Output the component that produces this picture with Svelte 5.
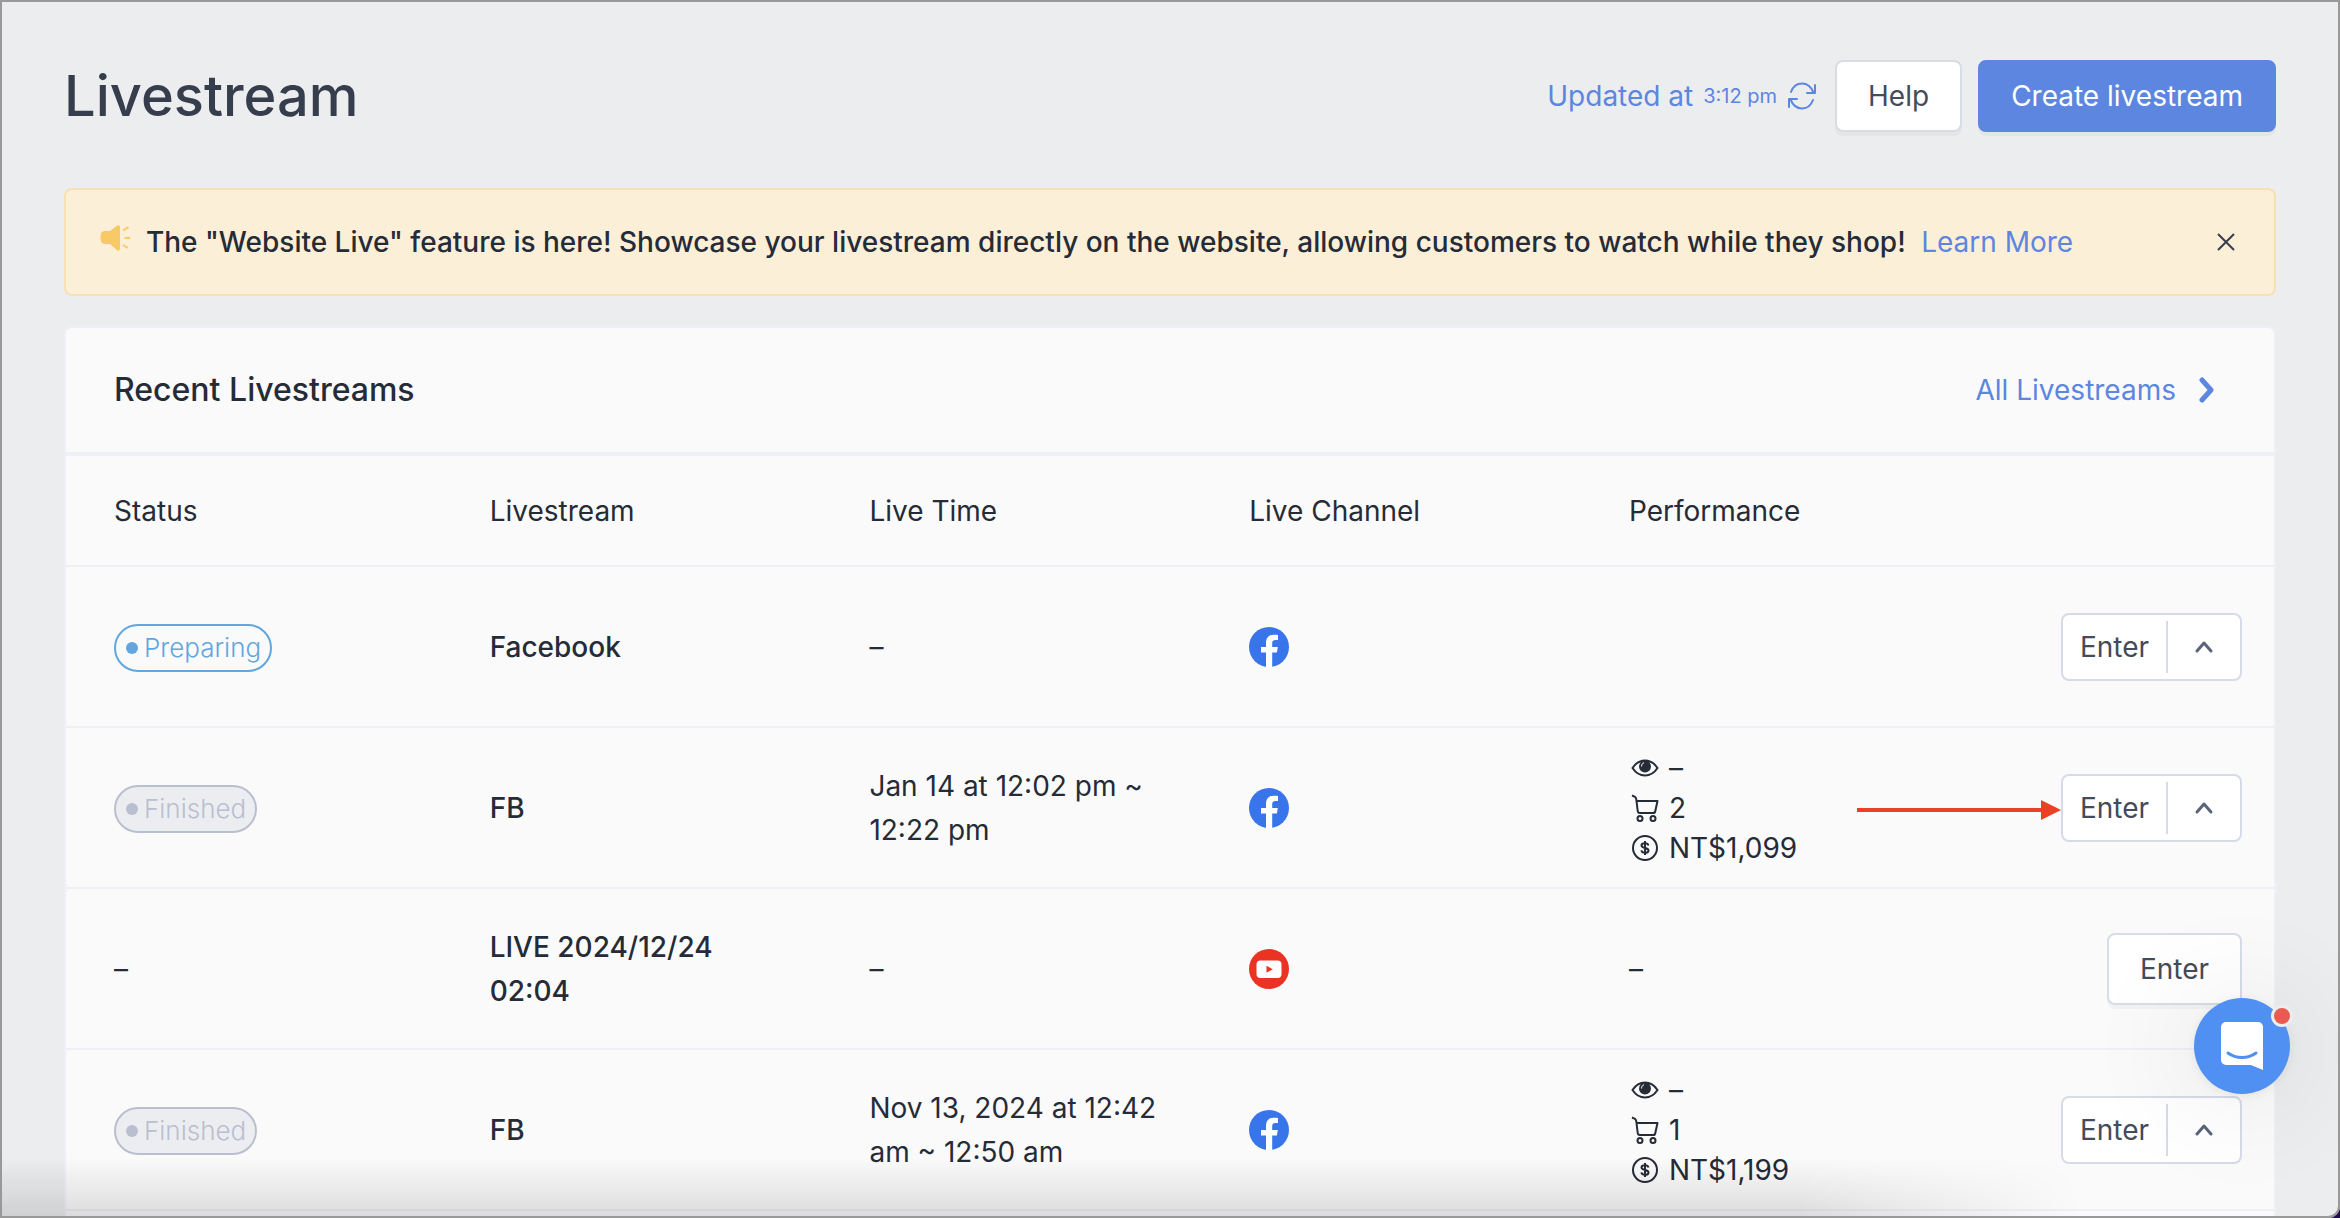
<script lang="ts">
  type Stream = {
    status: string;
    name: string;
    time: string;
    channel: string;
    views?: string;
    orders?: string;
    sales?: string;
    split: boolean;
    noStats?: boolean;
  };

  const streams: Stream[] = [
    { status: "Preparing", name: "Facebook", time: "–", channel: "facebook", split: true },
    {
      status: "Finished",
      name: "FB",
      time: "Jan 14 at 12:02 pm ~ 12:22 pm",
      channel: "facebook",
      views: "–",
      orders: "2",
      sales: "NT$1,099",
      split: true,
    },
    { status: "", name: "LIVE 2024/12/24 02:04", time: "–", channel: "youtube", split: false, noStats: true },
    {
      status: "Finished",
      name: "FB",
      time: "Nov 13, 2024 at 12:42 am ~ 12:50 am",
      channel: "facebook",
      views: "–",
      orders: "1",
      sales: "NT$1,199",
      split: true,
    },
  ];

  const columns = ["Status", "Livestream", "Live Time", "Live Channel", "Performance"];

  let showBanner = $state(true);
</script>

<div class="page">
  <header class="page-header">
    <h1>Livestream</h1>
    <div class="page-actions">
      <button class="refresh">
        <span>Updated at</span>
        <small>3:12 pm</small>
        <svg width="30" height="30" viewBox="0 0 30 30" fill="none" stroke="currentColor" stroke-width="2" stroke-linecap="round" stroke-linejoin="round">
          <path d="M4 11C6 5.500 10 2.500 15 2.500c5 0 9 3 11.500 9M28 4v8h-8" />
          <path d="M26 19C24 24.500 20 27.500 15 27.500c-5 0-9-3-11.500-9M2 26v-8h8" />
        </svg>
      </button>
      <button class="btn">Help</button>
      <button class="btn btn-primary">Create livestream</button>
    </div>
  </header>

  {#if showBanner}
    <div class="banner">
      <svg class="horn" width="32" height="34" viewBox="0 0 32 34" aria-hidden="true">
        <path fill="#f7c967" d="M5 6h5l7-5.300c1.500-1 3 0 3 1.500v21.600c0 1.500-1.500 2.500-3 1.500L10 19H5c-3 0-4.500-2-4.500-6.500S2 6 5 6z" />
        <path fill="none" stroke="#f7c967" stroke-width="2" d="M23 5.500l5.500-3.300M24.500 13H30M23 20l5 3" />
      </svg>
      <p>
        The "Website Live" feature is here! Showcase your livestream directly on the website, allowing customers to watch while they shop!
        <a href="#learn">Learn More</a>
      </p>
      <button class="close" aria-label="Close" onclick={() => (showBanner = false)}>
        <svg width="20" height="20" viewBox="0 0 20 20" fill="none" stroke="currentColor" stroke-width="2">
          <path d="M2 2l16 16M18 2L2 18" />
        </svg>
      </button>
    </div>
  {/if}

  <section class="card">
    <div class="card-header">
      <h2>Recent Livestreams</h2>
      <a href="#all">
        All Livestreams
        <svg width="18" height="26" viewBox="0 0 18 26" fill="none" stroke="currentColor" stroke-width="5" stroke-linecap="round" stroke-linejoin="round">
          <path d="M4 3l9 10-9 10" />
        </svg>
      </a>
    </div>

    <table>
      <thead>
        <tr>
          {#each columns as column}
            <th scope="col">{column}</th>
          {/each}
          <th class="actions" aria-label="Actions"></th>
        </tr>
      </thead>
      <tbody>
        {#each streams as stream}
          <tr>
            <td>
              {#if stream.status}
                <span class="tag" class:finished={stream.status === "Finished"}>{stream.status}</span>
              {:else}
                –
              {/if}
            </td>
            <td class="name">{stream.name}</td>
            <td>{stream.time}</td>
            <td>
              {#if stream.channel === "facebook"}
                <svg class="channel" viewBox="0 0 40 40" role="img" aria-label="Facebook">
                  <circle cx="20" cy="20" r="20" fill="#3975ea" />
                  <path fill="#fff" d="M17 40V25.500h-5V20h5v-3.500c0-6 3-8.800 8-8.800 1.500 0 3 .2 4 .4v5h-2.600c-2.400 0-3.200 1.400-3.200 3V20h5.600l-.9 5.500h-4.700V40z" />
                </svg>
              {:else}
                <svg class="channel" viewBox="0 0 40 40" role="img" aria-label="YouTube">
                  <circle cx="20" cy="20" r="20" fill="#ea3323" />
                  <rect x="7.500" y="11.500" width="25" height="17.500" rx="4" fill="#fff" />
                  <path fill="#ea3323" d="M17.500 16.700v7l6.300-3.500z" />
                </svg>
              {/if}
            </td>
            <td>
              {#if stream.noStats}
                –
              {:else if stream.sales}
                <ul class="stats">
                  <li>
                    <svg width="28" height="28" viewBox="0 0 28 28" fill="none" stroke="currentColor" stroke-width="2">
                      <path d="M1.500 14C8 4 20 4 26.500 14 20 24 8 24 1.500 14z" />
                      <circle cx="14" cy="12.500" r="6" fill="currentColor" stroke="none" />
                      <path d="M10.500 12.500c0-2 1-3.300 2.500-3.800" stroke="#fff" stroke-width="1" />
                    </svg>
                    {stream.views}
                  </li>
                  <li>
                    <svg width="28" height="28" viewBox="0 0 28 28" fill="none" stroke="currentColor" stroke-width="2" stroke-linejoin="round">
                      <path d="M1 1.500l3 1.300c1 .5 1.300 1.500 1.500 4.200l1.200 10c.2 1.500.8 2 2 2h13.600c1.200 0 1.800-.6 2-2L26.500 7h-21" />
                      <circle cx="9" cy="24.500" r="2.500" />
                      <circle cx="22" cy="24.500" r="2.500" />
                    </svg>
                    {stream.orders}
                  </li>
                  <li>
                    <svg width="28" height="28" viewBox="0 0 28 28" fill="none" stroke="currentColor" stroke-width="2">
                      <circle cx="14" cy="14" r="12" />
                      <path d="M17.500 11.500c-.4-1.600-1.800-2.200-3.500-2.200-2 0-3.500.8-3.500 2.300 0 3.200 7 1.500 7 4.800 0 1.500-1.500 2.400-3.500 2.400-1.800 0-3.300-.7-3.600-2.400M14 7v14" />
                    </svg>
                    {stream.sales}
                  </li>
                </ul>
              {/if}
            </td>
            <td class="actions">
              {#if stream.split}
                <div class="split">
                  <button>Enter</button>
                  <button class="toggle" aria-label="More actions">
                    <svg width="20" height="14" viewBox="0 0 20 14" fill="none" stroke="currentColor" stroke-width="3" stroke-linecap="round" stroke-linejoin="round">
                      <path d="M3 11l7-8 7 8" />
                    </svg>
                  </button>
                  {#if stream.orders === "2"}
                    <svg class="pointer" width="204" height="20" viewBox="0 0 204 20" aria-hidden="true">
                      <path fill="#ea4025" d="M0 8h184V0l20 10-20 10v-8H0z" />
                    </svg>
                  {/if}
                </div>
              {:else}
                <button class="btn">Enter</button>
              {/if}
            </td>
          </tr>
        {/each}
      </tbody>
    </table>
  </section>

  <div class="shade"></div>

  <button class="launcher" aria-label="Open chat">
    <svg width="44" height="50" viewBox="0 0 44 50">
      <path fill="#fff" d="M6 1h32a5 5 0 0 1 5 5v43l-12-5H6a5 5 0 0 1-5-5V6a5 5 0 0 1 5-5z" />
      <path fill="none" stroke="#5090f3" stroke-width="3" stroke-linecap="round" d="M8 32c8 6 20 6 28 0" />
    </svg>
    <span class="unread"></span>
  </button>
  <div class="frame"></div>
</div>

<style>
  :global(body) {
    margin: 0;
    background: #1f0d4d;
  }

  .page {
    position: relative;
    display: flex;
    flex-direction: column;
    box-sizing: border-box;
    min-height: 100vh;
    padding: 60px 64px 0;
    border-bottom-right-radius: 12px;
    background: #ecedef;
    color: #252b37;
    font-family: Inter, "Liberation Sans", sans-serif;
    font-size: 28px;
    line-height: 44px;
  }

  .frame {
    position: absolute;
    inset: 0;
    border: 2px solid #999;
    border-bottom-right-radius: 12px;
    pointer-events: none;
  }

  button {
    margin: 0;
    padding: 0;
    border: 0;
    background: none;
    color: inherit;
    font: inherit;
    cursor: pointer;
  }

  a {
    color: #5c86df;
    text-decoration: none;
  }

  h1,
  h2,
  p,
  ul {
    margin: 0;
    padding: 0;
  }

  h1 {
    color: #363d4d;
    font-size: 56px;
    font-weight: 500;
    line-height: 72px;
  }

  h2 {
    font-size: 32px;
    font-weight: 500;
  }

  .page-header {
    display: flex;
    align-items: center;
    justify-content: space-between;
    margin-bottom: 56px;
  }

  .page-actions {
    display: flex;
    align-items: center;
    gap: 16px;
  }

  .refresh {
    display: flex;
    align-items: center;
    gap: 10px;
    margin-right: 2px;
    color: #5c86df;
  }

  .refresh small {
    font-size: 20px;
  }

  .btn {
    box-sizing: border-box;
    height: 72px;
    padding: 0 31px;
    border: 2px solid #d5dde6;
    border-radius: 8px;
    background: #fff;
    box-shadow: 0 4px 0 rgba(0, 0, 0, 0.03);
    color: #444b59;
  }

  .btn-primary {
    border-color: #5c86df;
    background: #5c86df;
    color: #fff;
  }

  .banner {
    display: flex;
    align-items: center;
    padding: 30px 32px 30px 34px;
    border: 2px solid #f9e0b3;
    border-radius: 8px;
    background: #fcefd7;
    margin-bottom: 30px;
  }

  .horn {
    margin-right: 14px;
  }

  .banner p {
    flex: 1;
    font-weight: 500;
  }

  .banner a {
    margin-left: 8px;
    font-weight: 400;
  }

  .close {
    display: flex;
    padding: 6px;
    color: #363d4d;
  }

  .card {
    flex: 1;
    border: 2px solid #eff0f5;
    border-bottom: 0;
    border-radius: 8px 8px 0 0;
    background: #fafafa;
  }

  .card-header {
    display: flex;
    align-items: center;
    justify-content: space-between;
    padding: 40px 58px 40px 48px;
    border-bottom: 4px solid #eff0f5;
  }

  .card-header a {
    display: flex;
    align-items: center;
    gap: 22px;
  }

  table {
    width: 100%;
    border-collapse: collapse;
    table-layout: fixed;
  }

  th,
  td {
    box-sizing: border-box;
    width: 17.2%;
    padding: 0 48px 0 24px;
    border-bottom: 2px solid #eff0f5;
    text-align: left;
    vertical-align: middle;
  }

  th {
    height: 110px;
    font-weight: 400;
  }

  td {
    height: 161px;
  }

  th:first-child,
  td:first-child {
    width: 18.1%;
    padding-left: 48px;
  }

  .actions {
    width: auto;
    padding: 0 32px 0 0;
    text-align: right;
  }

  .name {
    font-weight: 500;
  }

  .tag {
    display: inline-flex;
    align-items: center;
    box-sizing: border-box;
    height: 48px;
    padding: 0 9px 0 10px;
    border: 2px solid #62a6dd;
    border-radius: 24px;
    color: #62a6dd;
    font-size: 26px;
    font-weight: 300;
  }

  .tag::before {
    content: "";
    width: 12px;
    height: 12px;
    margin-right: 6px;
    border-radius: 50%;
    background: currentColor;
  }

  .tag.finished {
    border-color: #b9bfcf;
    background: #ecedf0;
    color: #b9bfcf;
  }

  .channel {
    display: block;
    width: 40px;
    height: 40px;
  }

  .stats {
    padding-left: 2px;
    list-style: none;
    line-height: 40px;
  }

  .stats li {
    display: flex;
    align-items: center;
    gap: 10px;
  }

  .split {
    position: relative;
    display: inline-flex;
    align-items: center;
    box-sizing: border-box;
    height: 68px;
    border: 2px solid #d7dbe8;
    border-radius: 8px;
    background: #fff;
    color: #444b59;
    vertical-align: middle;
  }

  .split button {
    padding: 0 17px;
    line-height: 52px;
  }

  .split .toggle {
    display: flex;
    align-items: center;
    height: 52px;
    padding: 0 26px;
    border-left: 2px solid #d7dbe8;
    color: #5b6478;
  }

  .pointer {
    position: absolute;
    top: 24px;
    right: 100%;
    margin-right: 2px;
  }

  /* soft shadow rising from the lower edge of the window */
  .shade {
    position: absolute;
    right: 260px;
    bottom: 0;
    left: 0;
    height: 60px;
    background: linear-gradient(transparent, rgba(0, 0, 0, 0.12));
    mask-image: linear-gradient(to left, transparent, #000 280px);
    pointer-events: none;
  }

  .launcher {
    position: fixed;
    right: 50px;
    bottom: 124px;
    display: flex;
    align-items: center;
    justify-content: center;
    width: 96px;
    height: 96px;
    border-radius: 50%;
    background: #5090f3;
    box-shadow: 0 2px 12px rgba(0, 0, 0, 0.08), 0 4px 120px rgba(0, 0, 0, 0.12);
  }

  .unread {
    position: absolute;
    top: 7px;
    right: -3px;
    width: 16px;
    height: 16px;
    border: 3px solid #ecedef;
    border-radius: 50%;
    background: #eb5a50;
  }
</style>
